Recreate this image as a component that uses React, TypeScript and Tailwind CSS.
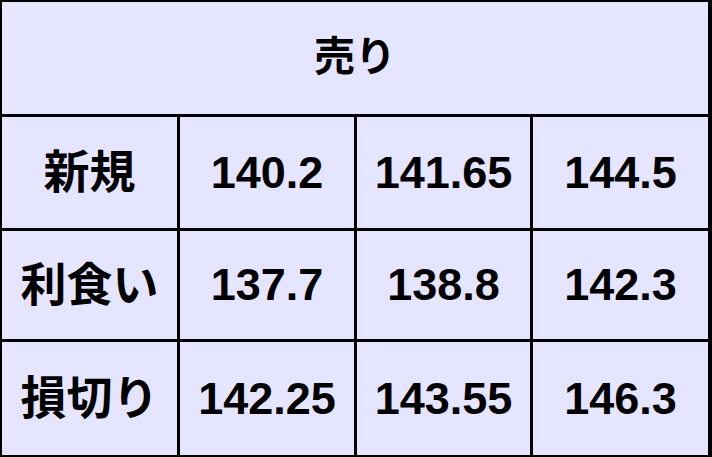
import React from "react";

const rows: [string, string, string, string][] = [
  ["新規", "140.2", "141.65", "144.5"],
  ["利食い", "137.7", "138.8", "142.3"],
  ["損切り", "142.25", "143.55", "146.3"],
];

export default function App() {
  return (
    <div
      className="w-[712px] h-[457px] bg-black pt-[2px] pl-[2px] pr-[4px] pb-[2px] grid grid-cols-[175px_174px_173px_175px] grid-rows-[112px_111px_108px_113px] gap-[3px] text-black"
      style={{ fontFamily: '"Liberation Sans", "Noto Sans CJK JP", sans-serif' }}
    >
      <div className="col-span-4 bg-[#e5e5ff] flex items-center justify-center text-[41px] font-bold">
        売り
      </div>
      {rows.map((r) => (
        <React.Fragment key={r[0]}>
          <div className="bg-[#e5e5ff] flex items-center justify-center text-[46px] font-bold">
            {r[0]}
          </div>
          {r.slice(1).map((v, i) => (
            <div
              key={i}
              className="bg-[#e5e5ff] flex items-center justify-center text-[45px] font-bold"
            >
              {v}
            </div>
          ))}
        </React.Fragment>
      ))}
    </div>
  );
}
